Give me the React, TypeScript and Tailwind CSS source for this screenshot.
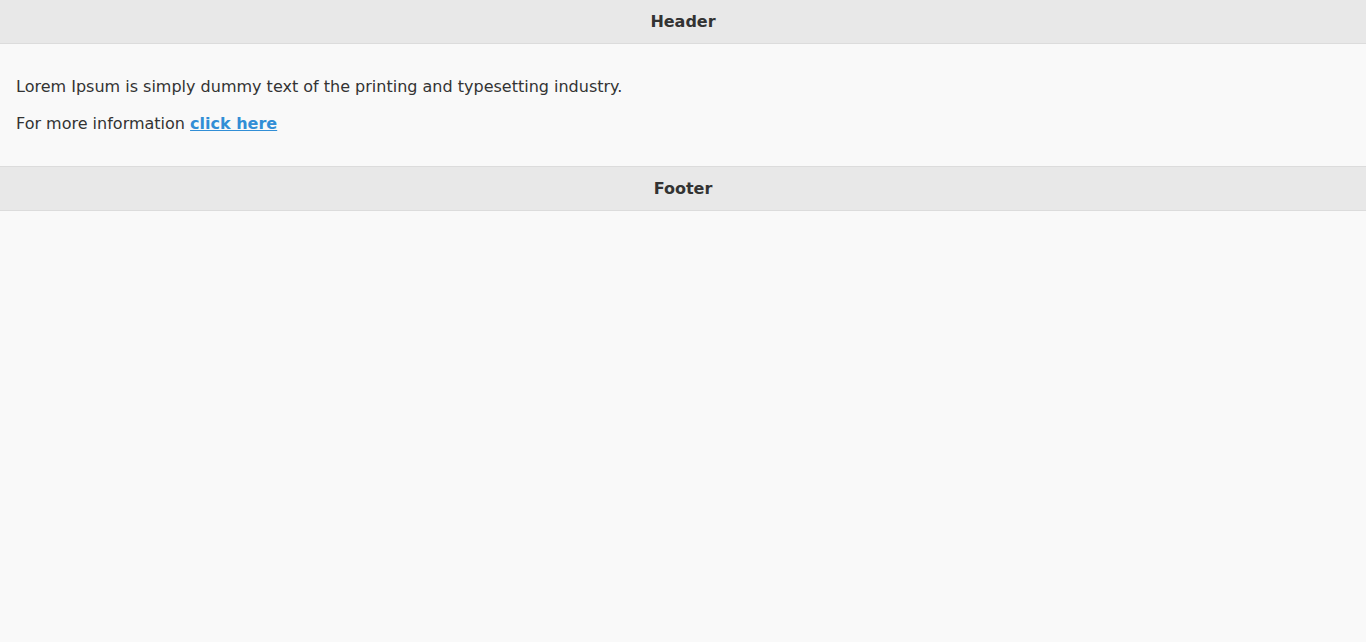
export default function App() {
  return (
    <div className="min-h-screen bg-[#f9f9f9] text-[#333333] font-['DejaVu_Sans',sans-serif]">
      <header className="h-[44px] flex items-center justify-center bg-[#e8e8e8] border-b border-[#dcdcdc]">
        <h1 className="text-[16px] font-bold">Header</h1>
      </header>

      <main className="px-4 pt-[31px] pb-[30px] flex flex-col gap-[13px] text-[16px] leading-6">
        <p>Lorem Ipsum is simply dummy text of the printing and typesetting industry.</p>
        <p>
          For more information{" "}
          <a href="#" className="text-[#318ed6] font-bold underline">
            click here
          </a>
        </p>
      </main>

      <footer className="h-[45px] flex items-center justify-center bg-[#e8e8e8] border-y border-[#dcdcdc]">
        <h2 className="text-[16px] font-bold">Footer</h2>
      </footer>
    </div>
  );
}
